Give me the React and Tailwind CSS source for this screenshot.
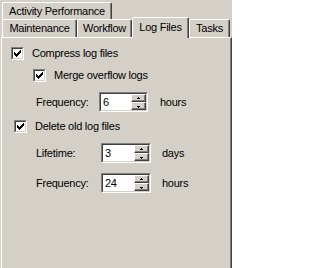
import React from 'react';

const FONT = { fontFamily: '"Liberation Sans", Arial, sans-serif' };

// classic 7x7 check glyph, one 1x3 column per x
const CHECK_COLS = [2, 3, 4, 3, 2, 1, 0];

const Checkbox = ({ checked }) => (
  <div className="w-[13px] h-[13px] shrink-0 border border-t-[#808080] border-l-[#808080] border-b-white border-r-white">
    <div className="w-full h-full flex items-center justify-center bg-white border border-t-[#404040] border-l-[#404040] border-b-[#d4d0c8] border-r-[#d4d0c8]">
      {checked && (
        <svg width="7" height="7" viewBox="0 0 7 7" shapeRendering="crispEdges">
          {CHECK_COLS.map((y, x) => (
            <rect key={x} x={x} y={y} width="1" height="3" fill="#000" />
          ))}
        </svg>
      )}
    </div>
  </div>
);

const SpinBtn = ({ up }) => (
  <div className="flex-1 flex items-center justify-center bg-[#d4d0c8] border border-t-white border-l-white border-b-[#404040] border-r-[#404040] shadow-[inset_-1px_-1px_0_#808080]">
    <svg width="5" height="3" viewBox="0 0 5 3" shapeRendering="crispEdges">
      {up ? (
        <>
          <rect x="2" y="0" width="1" height="1" fill="#000" />
          <rect x="1" y="1" width="3" height="1" fill="#000" />
        </>
      ) : (
        <>
          <rect x="1" y="1" width="3" height="1" fill="#000" />
          <rect x="2" y="2" width="1" height="1" fill="#000" />
        </>
      )}
    </svg>
  </div>
);

const Spin = ({ value, w }) => (
  <div className={`${w} h-[20px] shrink-0 border border-t-[#808080] border-l-[#808080] border-b-white border-r-white`}>
    <div className="w-full h-full flex bg-white border border-t-[#404040] border-l-[#404040] border-b-[#d4d0c8] border-r-[#d4d0c8]">
      <span className="flex-1 pl-[2px] leading-[16px]">{value}</span>
      <div className="w-[15px] flex flex-col">
        <SpinBtn up />
        <SpinBtn />
      </div>
    </div>
  </div>
);

const Tab = ({ label, w, selected }) => (
  <div
    className={`${w} flex items-center justify-center bg-[#d4d0c8] border-t border-l border-r border-t-white border-l-white border-r-[#404040] rounded-tl-[2px] rounded-tr-[2px] shadow-[inset_-1px_0_0_#808080] ${
      selected ? 'relative z-10 h-[21px] -mt-[2px] pb-[2px]' : 'h-[18px]'
    }`}
  >
    {label}
  </div>
);

export default function App() {
  return (
    <div className="w-[232px] h-[268px] overflow-hidden bg-[#d4d0c8] text-black text-[11px] tracking-[-0.25px] flex flex-col" style={FONT}>
      {/* back row of tabs */}
      <div className="flex mt-[2px] pl-[2px] h-[17px]">
        <div className="w-[110px] h-[17px] flex items-center justify-center border-t border-l border-r border-t-white border-l-white border-r-[#404040] rounded-tl-[2px] rounded-tr-[2px] shadow-[inset_-1px_0_0_#808080]">
          Activity Performance
        </div>
      </div>

      {/* front row */}
      <div className="flex pl-[2px] h-[18px]">
        <Tab label="Maintenance" w="w-[75px]" />
        <Tab label="Workflow" w="w-[55px]" />
        <Tab label="Log Files" w="w-[57px]" selected />
        <Tab label="Tasks" w="w-[41px]" />
      </div>

      {/* page */}
      <div className="ml-[1px] flex-1 flex flex-col border-t border-l border-r border-t-white border-l-white border-r-[#404040] shadow-[inset_-1px_0_0_#808080]">
        <div className="flex items-center mt-[9px] pl-[9px] h-[13px]">
          <Checkbox checked />
          <span className="ml-[8px]">Compress log files</span>
        </div>

        <div className="flex items-center mt-[9px] pl-[31px] h-[13px]">
          <Checkbox checked />
          <span className="ml-[8px]">Merge overflow logs</span>
        </div>

        <div className="flex items-center mt-[10px] pl-[34px] h-[20px]">
          <span className="w-[63px]">Frequency:</span>
          <Spin value="6" w="w-[49px]" />
          <span className="ml-[12px]">hours</span>
        </div>

        <div className="flex items-center mt-[8px] pl-[12px] h-[13px]">
          <Checkbox checked />
          <span className="ml-[8px]">Delete old log files</span>
        </div>

        <div className="flex items-center mt-[10px] pl-[34px] h-[20px]">
          <span className="w-[65px]">Lifetime:</span>
          <Spin value="3" w="w-[50px]" />
          <span className="ml-[11px]">days</span>
        </div>

        <div className="flex items-center mt-[10px] pl-[34px] h-[20px]">
          <span className="w-[65px]">Frequency:</span>
          <Spin value="24" w="w-[50px]" />
          <span className="ml-[11px]">hours</span>
        </div>
      </div>
    </div>
  );
}
